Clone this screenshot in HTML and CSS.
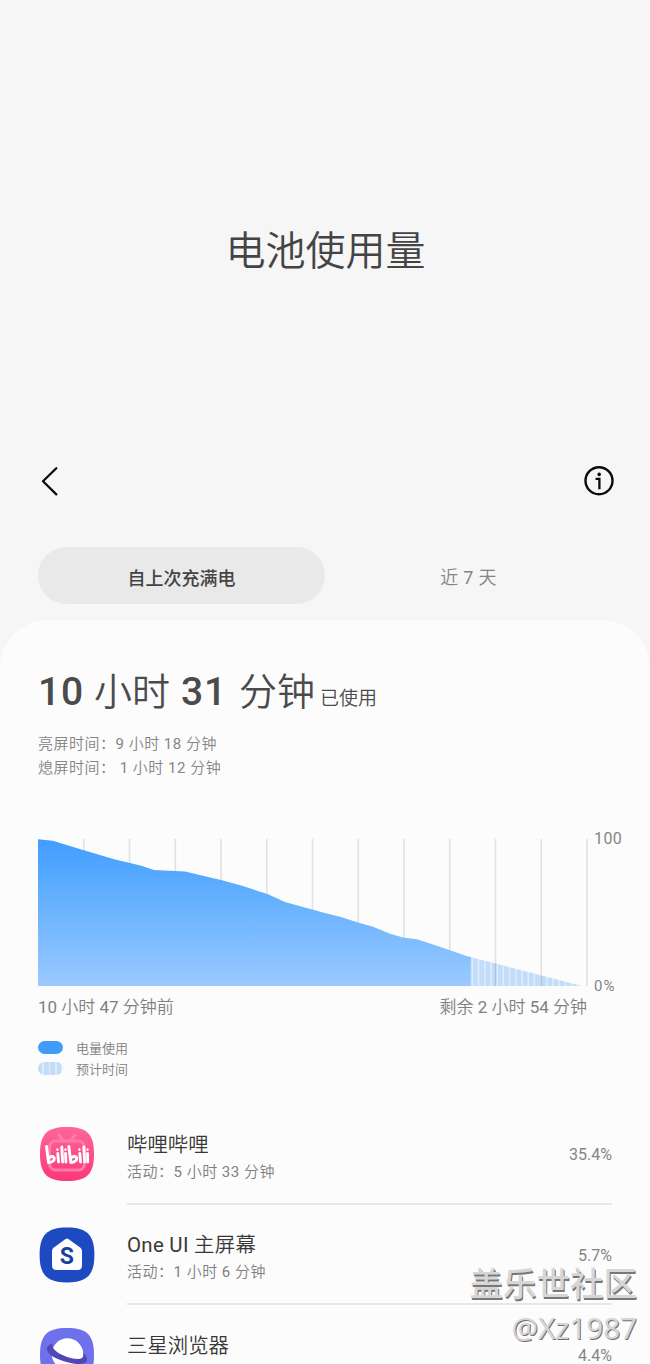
FILE: index.html
```html
<!DOCTYPE html>
<html lang="zh-CN">
<head>
<meta charset="utf-8">
<title>电池使用量</title>
<link rel="stylesheet" href="styles.css">
</head>
<body>
<main class="screen">
  <header class="hero"><h1 class="title">电池使用量</h1></header>
  <nav class="toolbar">
    <svg class="back" width="20" height="32" viewBox="0 0 20 32"><path d="M16.3 3.2 3 16.3 16.3 29.4" fill="none" stroke="#0b0b0b" stroke-width="2.3" stroke-linecap="round" stroke-linejoin="round"/></svg>
    <svg class="info" width="32" height="32" viewBox="0 0 32 32"><circle cx="16" cy="15.7" r="13.5" fill="none" stroke="#0b0b0b" stroke-width="2.4"/><circle cx="16.2" cy="9.4" r="1.8" fill="#0b0b0b"/><path d="M12.6 13.9h3.8v10.4" fill="none" stroke="#0b0b0b" stroke-width="2.3"/></svg>
  </nav>
  <div class="tabs">
    <div class="tab tab-active">自上次充满电</div>
    <div class="tab">近 7 天</div>
  </div>
  <section class="card">
    <div class="summary"><b>10</b><span class="unit unit-hour">小时</span><b>31</b><span class="unit unit-minute">分钟</span><span class="used">已使用</span></div>
    <div class="detail">亮屏时间：9 小时 18 分钟</div>
    <div class="detail">熄屏时间： 1 小时 12 分钟</div>
    <div class="chart">
      <svg width="551" height="148" viewBox="0 0 551 148">
        <defs>
          <linearGradient id="usage" x1="0" y1="0" x2="0" y2="1"><stop offset="0" stop-color="#419dff"/><stop offset=".25" stop-color="#56a9ff"/><stop offset="1" stop-color="#9acaff"/></linearGradient>
          <pattern id="stripes" x="435.2" width="6.2" height="8" patternUnits="userSpaceOnUse"><rect width="6.2" height="8" fill="#dfeeff"/><rect width="4.7" height="8" fill="#c3dcf7"/></pattern>
        </defs>
        <path d="M45.8 0V147M91.5 0V147M137.3 0V147M183 0V147M228.8 0V147M274.5 0V147M320.2 0V147M366 0V147M411.8 0V147M457.5 0V147M503.3 0V147M549 0V147" stroke="#e2e2e2" stroke-width="1.6"/>
        <path d="M432.5 118 544 147H432.5Z" fill="url(#stripes)"/>
        <path d="M457.5 124.5V147M503.3 136.4V147" stroke="#a8c5e3" stroke-width="1.5"/>
        <path d="M0 .3 14.7 1.7 45 11 77 20.5 92 24 104 27 116 31 147 32.5 167 37.3 184 41.2 204 46.7 230 55.3 247 63 274 70.4 287 74 302 77.8 320 83.5 335 87.7 352 94.7 365 98.5 379 100.2 395 105.5 412 111.3 430 117.5 432.8 118V147H0Z" fill="url(#usage)"/>
      </svg>
      <div class="scale"><span>100</span><span class="zero">0%</span></div>
    </div>
    <div class="range"><span>10 小时 47 分钟前</span><span>剩余 2 小时 54 分钟</span></div>
    <div class="legend">
      <i class="swatch"></i><span>电量使用</span>
      <i class="swatch swatch-forecast"></i><span>预计时间</span>
    </div>
    <ul class="apps">
      <li class="app">
        <svg class="icon" width="56" height="56" viewBox="0 0 56 56">
          <defs><linearGradient id="pink" x1="0" y1="0" x2="0" y2="1"><stop offset="0" stop-color="#ff6699"/><stop offset="1" stop-color="#fb3878"/></linearGradient></defs>
          <path d="M28 1C48 1 55 8 55 28S48 55 28 55 1 48 1 28 8 1 28 1Z" fill="url(#pink)"/>
          <g fill="none" stroke="#ff7ba6" stroke-width="3" stroke-linecap="round"><rect x="10.5" y="15" width="35" height="29" rx="6"/><path d="m20 9 4 5.5M36 9l-4 5.5"/></g>
          <g transform="translate(-.5 0)" fill="none" stroke="#fff" stroke-width="2.9" stroke-linecap="round" stroke-linejoin="round"><path d="M8 20.5 10 36.5C14 36.5 16.5 34 15.5 31.5 14.6 29.6 12 30.5 10 32M19.3 27.5l.7 8.5M23.3 21l.8 15M27 27.5l.4 8.5M30.3 20.5l2 16C36 36.5 39 34 38 31.5 37 29.6 34 30.5 32.3 32M41.3 27.5l.7 8.5M45.3 21l.8 15M49 27.5l.2 8.5"/><path d="M18.9 23.5v.2M27 23.5v.2M40.9 23.5v.2M49 23.5v.2" stroke-width="2.4"/></g>
        </svg>
        <div class="app-body"><div class="app-text"><div class="name">哔哩哔哩</div><div class="active">活动：5 小时 33 分钟</div></div><span class="percent">35.4%</span></div>
      </li>
      <li class="app">
        <svg class="icon" width="56" height="56" viewBox="0 0 56 56">
          <path d="M28 .6C48 .6 55.4 8 55.4 28S48 55.4 28 55.4.6 48 .6 28 8 .6 28 .6Z" fill="#1d49c1"/>
          <path d="M26.3 12.2Q28 11 29.7 12.2L41.5 20.8Q43 22 43 24V38.5Q43 43 38.5 43H17.5Q13 43 13 38.5V24Q13 22 14.5 20.8Z" fill="#fff"/>
          <text class="home-letter" x="27.8" y="37" text-anchor="middle">S</text>
        </svg>
        <div class="app-body"><div class="app-text"><div class="name name-mixed">One UI 主屏幕</div><div class="active">活动：1 小时 6 分钟</div></div><span class="percent">5.7%</span></div>
      </li>
      <li class="app">
        <svg class="icon" width="56" height="56" viewBox="0 0 56 56">
          <path d="M28 1C48 1 55 8 55 28S48 55 28 55 1 48 1 28 8 1 28 1Z" fill="#6e70ec"/>
          <circle cx="28.5" cy="27" r="15.7" fill="#fff"/>
          <path d="M13.7 16.5C4.5 19 6 27 20 32.5S47 39 48 33C48.4 30 46 27.5 44 26 46 31 42 33 34 31.5 24 29.5 11 23 13.7 16.5Z" fill="#5147b5"/>
        </svg>
        <div class="app-body"><div class="app-text"><div class="name">三星浏览器</div></div><span class="percent">4.4%</span></div>
      </li>
    </ul>
  </section>
  <div class="watermark"><div class="community">盖乐世社区</div><div class="author">@Xz1987</div></div>
</main>
</body>
</html>
```
FILE: styles.css
```css
* { box-sizing: border-box; }
body { margin: 0; background: #f6f6f6; font-family: Roboto, "Noto Sans CJK SC DemiLight", "Noto Sans CJK SC", sans-serif; font-weight: 400; color: #484848; }
.screen { position: relative; width: 650px; height: 1364px; overflow: hidden; }
.hero { height: 450px; padding: 222px 0 0 1px; text-align: center; }
.title { margin: 0; font-size: 40px; line-height: 60px; font-weight: 400; color: #444; }
.toolbar { display: flex; justify-content: space-between; height: 97px; padding: 15px 35px 0 40px; }
.tabs { display: grid; grid-template-columns: 287px 287px; height: 73px; padding-left: 38px; }
.tab { height: 57px; border-radius: 29px; text-align: center; font-size: 18px; line-height: 61px; color: #858585; letter-spacing: .3px; }
.tab-active { background: #e9e9e9; color: #444; font-family: "Noto Sans CJK SC", sans-serif; font-weight: 500; letter-spacing: 0; }
.card { height: 744px; padding: 43px 38px 0; border-radius: 48px 48px 0 0; background: #fcfcfc; }
.summary { height: 69px; line-height: 58px; font-size: 38px; white-space: nowrap; color: #4b4b4b; }
.summary b { font-weight: 500; font-size: 39px; letter-spacing: .8px; }
.unit-hour { margin: 0 11px 0 10px; }
.unit-minute { margin-left: 12px; }
.used { font-size: 19px; margin-left: 5px; }
.detail { height: 24px; line-height: 24px; font-size: 15px; color: #858585; letter-spacing: .5px; white-space: pre; }
.chart { display: flex; height: 148px; margin-top: 59px; }
.chart svg { flex: none; }
.scale { display: flex; flex-direction: column; justify-content: space-between; margin: -10px 0 -9px 5px; font-size: 16px; line-height: 20px; color: #858585; letter-spacing: .4px; }
.zero { font-size: 15px; letter-spacing: 1px; }
.range { display: flex; justify-content: space-between; width: 549px; height: 52px; padding-top: 8px; font-size: 17px; line-height: 24px; color: #808080; }
.legend { display: grid; grid-template-columns: 25px auto; grid-auto-rows: 20.5px; column-gap: 13px; align-items: center; font-size: 13px; line-height: 20px; color: #808080; }
.swatch { width: 25px; height: 13px; margin-top: -3px; border-radius: 7px; background: #419cf8; }
.swatch-forecast { background: repeating-linear-gradient(90deg, #c3dcf7 0 4.5px, #dcecfd 4.5px 6.2px); }
.apps { list-style: none; margin: 24px 0 0; padding: 0; }
.app { display: flex; height: 100.5px; }
.icon { flex: none; margin: 22px 32.5px 0 .5px; }
.app-body { display: flex; justify-content: space-between; width: 485px; border-bottom: 2px solid #e7e7e7; }
.app-text { padding-top: 26.5px; }
.name { font-size: 20.4px; line-height: 28px; color: #383838; }
.name-mixed { letter-spacing: .3px; }
.active { font-size: 15px; line-height: 27px; letter-spacing: .5px; color: #808080; }
.percent { padding-top: 41px; font-size: 16px; line-height: 20px; color: #858585; }
.home-letter { font: 700 23px Roboto, sans-serif; fill: #1d3f9e; }
.watermark { position: absolute; right: 13px; top: 1261px; text-align: right; color: #d8d5d5; text-shadow: 1px 1px 0 #707070; }
.community { font: 500 33.5px/42px "Noto Sans CJK SC", sans-serif; text-shadow: 1px 2px 0 #777; }
.author { font: 400 29.6px/50px "Noto Sans", sans-serif; }
```
